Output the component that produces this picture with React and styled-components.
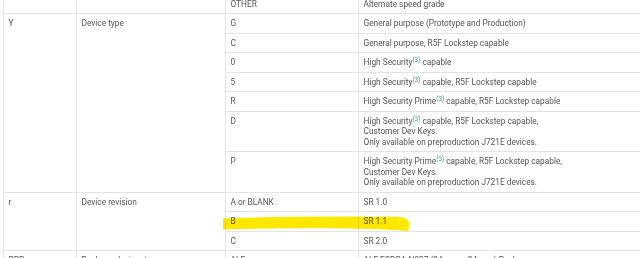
import styled, { createGlobalStyle } from "styled-components";

const Global = createGlobalStyle`
  html, body {
    margin: 0;
    padding: 0;
    background: #fff;
  }
  body {
    font-family: Roboto, "Liberation Sans", Arial, sans-serif;
    overflow: hidden;
  }
`;

const Page = styled.div`
  position: relative;
  width: 640px;
  height: 258px;
  overflow: hidden;
`;

const Table = styled.table`
  border-collapse: collapse;
  table-layout: fixed;
  width: 720px;
  margin: -6.5px 0 0 2.5px;
  font-size: 8.3px;
  line-height: 10.5px;
  color: #555;
`;

const Cell = styled.td`
  border: 1px solid #e4e4e4;
  padding: 4px 5px;
  vertical-align: top;
  text-align: left;
  white-space: nowrap;
`;

const Ref = styled.sup`
  font-size: 6.3px;
  line-height: 0;
  vertical-align: 2.8px;
  color: #2aa3a6;
`;

const Marker = styled.svg`
  position: absolute;
  left: 0;
  top: 0;
  pointer-events: none;
  mix-blend-mode: multiply;
`;

const hs = (prime) => (
  <>
    High Security{prime ? " Prime" : ""}
    <Ref>(3)</Ref>
  </>
);

const deviceTypes = [
  ["G", <>General purpose (Prototype and Production)</>],
  ["C", <>General purpose, R5F Lockstep capable</>],
  ["0", <>{hs(false)} capable</>],
  ["5", <>{hs(false)} capable, R5F Lockstep capable</>],
  ["R", <>{hs(true)} capable, R5F Lockstep capable</>],
  [
    "D",
    <>
      {hs(false)} capable, R5F Lockstep capable,
      <br />
      Customer Dev Keys.
      <br />
      Only available on preproduction J721E devices.
    </>,
  ],
  [
    "P",
    <>
      {hs(true)} capable, R5F Lockstep capable,
      <br />
      Customer Dev Keys.
      <br />
      Only available on preproduction J721E devices.
    </>,
  ],
];

const revisions = [
  ["A or BLANK", "SR 1.0"],
  ["B", "SR 1.1"],
  ["C", "SR 2.0"],
];

export default function App() {
  return (
    <Page>
      <Global />
      <Table>
        <colgroup>
          <col style={{ width: 73 }} />
          <col style={{ width: 149 }} />
          <col style={{ width: 133 }} />
          <col />
        </colgroup>
        <tbody>
          <tr>
            <Cell />
            <Cell />
            <Cell>OTHER</Cell>
            <Cell>Alternate speed grade</Cell>
          </tr>
          {deviceTypes.map(([code, desc], i) => (
            <tr key={code}>
              {i === 0 && (
                <>
                  <Cell rowSpan={deviceTypes.length}>Y</Cell>
                  <Cell rowSpan={deviceTypes.length}>Device type</Cell>
                </>
              )}
              <Cell>{code}</Cell>
              <Cell>{desc}</Cell>
            </tr>
          ))}
          {revisions.map(([code, desc], i) => (
            <tr key={code}>
              {i === 0 && (
                <>
                  <Cell rowSpan={revisions.length}>r</Cell>
                  <Cell rowSpan={revisions.length}>Device revision</Cell>
                </>
              )}
              <Cell>{code}</Cell>
              <Cell>{desc}</Cell>
            </tr>
          ))}
          <tr>
            <Cell>PPP</Cell>
            <Cell>Package designator</Cell>
            <Cell>ALF</Cell>
            <Cell>ALF FCBGA-N827 (24 mm × 24 mm) Package</Cell>
          </tr>
        </tbody>
      </Table>
      <Marker width="640" height="258" viewBox="0 0 640 258">
        <path
          d="M223 218.5 Q300 215.5 398 216.8 Q409 217.5 409 223 L408.5 231 Q380 228.5 320 228 Q270 228.3 223 229.5 Z"
          fill="#ffe800"
        />
      </Marker>
    </Page>
  );
}
